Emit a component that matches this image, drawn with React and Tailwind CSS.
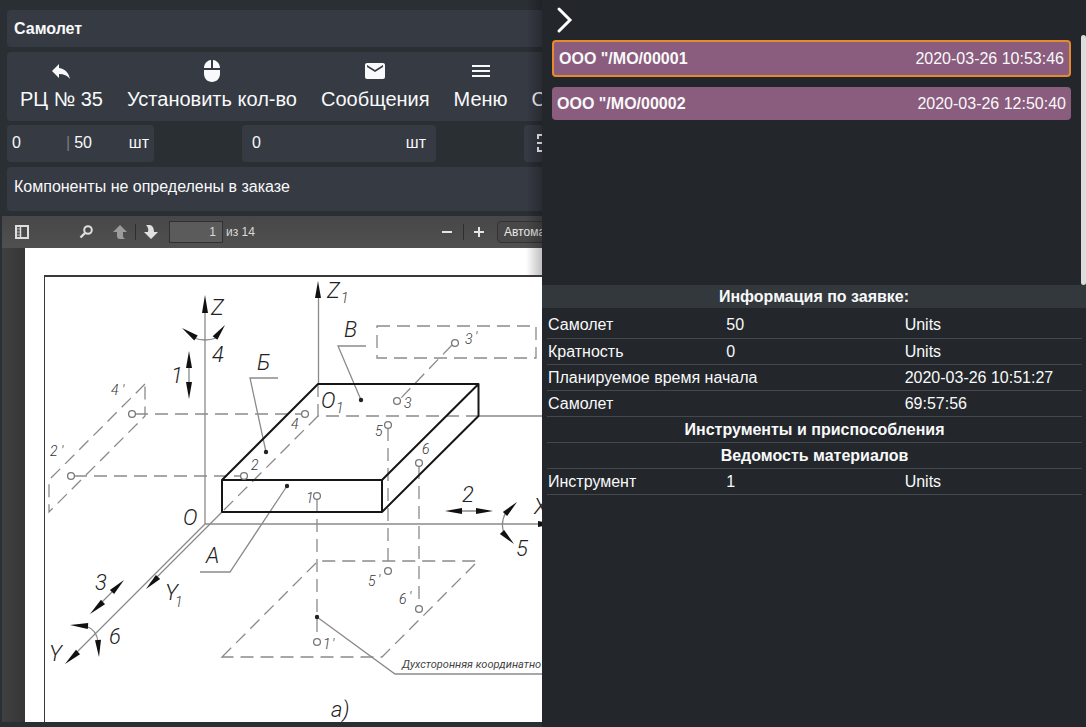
import React from "react";
import { MdEmail, MdMenu, MdMouse, MdReply } from "react-icons/md";

const orders = [
  { name: 'ООО "/МО/00001', date: "2020-03-26 10:53:46", active: true },
  { name: 'ООО "/МО/00002', date: "2020-03-26 12:50:40", active: false },
];

const toolbarItems = [
  { name: "РЦ № 35", icon: <MdReply size={24} /> },
  { name: "Установить кол-во", icon: <MdMouse size={24} /> },
  { name: "Сообщения", icon: <MdEmail size={24} /> },
  { name: "Меню", icon: <MdMenu size={24} /> },
  { name: "С", icon: null },
];

const infoRows = [
  { name: "Самолет", value: "50", unit: "Units" },
  { name: "Кратность", value: "0", unit: "Units" },
  { name: "Планируемое время начала", unit: "2020-03-26 10:51:27" },
  { name: "Самолет", value: "", unit: "69:57:56" },
  { title: "Инструменты и приспособления" },
  { title: "Ведомость материалов" },
  { name: "Инструмент", value: "1", unit: "Units" },
];

// [tip x, tip y, base x, base y]
const arrows = [
  [205, 295, 205, 313],
  [318, 281, 318, 298],
  [182, 328, 196, 338],
  [225, 325, 215, 338],
  [189, 351, 189, 368],
  [189, 399, 189, 382],
  [65, 664, 78, 652],
  [146, 589, 158, 577],
  [445, 511, 462, 511],
  [493, 511, 476, 511],
  [517, 502, 505, 514],
  [514, 544, 502, 532],
  [124, 580, 112, 592],
  [90, 614, 103, 602],
  [70, 625, 88, 626],
  [99, 657, 98, 640],
  [556, 524, 538, 524],
];

const circles = [
  [132, 414],
  [305, 414],
  [71, 476],
  [244, 476],
  [455, 343],
  [397, 401],
  [388, 425],
  [388, 571],
  [419, 463],
  [419, 609],
  [317, 496],
  [317, 642],
];

const dots = [
  [266, 452],
  [361, 400],
  [287, 486],
  [317, 617],
];

const bigLabels = [
  ["Z", 211, 315],
  ["4", 212, 362],
  ["1", 171, 383],
  ["Б", 257, 370],
  ["В", 344, 337],
  ["Z", 327, 298],
  ["О", 321, 408],
  ["О", 183, 525],
  ["А", 206, 563],
  ["3", 95, 590],
  ["6", 109, 644],
  ["Y", 49, 661],
  ["Y", 165, 600],
  ["2", 462, 502],
  ["X", 534, 514],
  ["5", 516, 556],
  ["а)", 331, 717],
];

const smallLabels = [
  ["1", 341, 303],
  ["1", 336, 413],
  ["1", 175, 607],
  ["4", 111, 395],
  ["′", 122, 395],
  ["2", 50, 456],
  ["′", 61, 456],
  ["4", 291, 429],
  ["2", 251, 470],
  ["3", 465, 344],
  ["′", 475, 342],
  ["3", 404, 408],
  ["5", 375, 436],
  ["6", 422, 454],
  ["1", 306, 503],
  ["5", 368, 586],
  ["′", 378, 585],
  ["6", 399, 604],
  ["′", 409, 602],
  ["1", 323, 649],
  ["′", 332, 649],
];

const arrowPath = ([tx, ty, bx, by]) => {
  const len = Math.hypot(tx - bx, ty - by);
  const nx = (-(ty - by) / len) * 3;
  const ny = ((tx - bx) / len) * 3;
  return `M${tx} ${ty}L${bx + nx} ${by + ny}L${bx - nx} ${by - ny}Z`;
};

const Drawing = () => (
  <svg
    width="517"
    height="474"
    viewBox="25 248 517 474"
    className="block shrink-0 font-['Roboto','Liberation_Sans',sans-serif] italic"
    fill="none"
  >
    {/* sheet frame */}
    <path d="M44 276H542" stroke="#3a3a3c" strokeWidth="2" />
    <path d="M44.500 276V722" stroke="#3a3a3c" />

    {/* axes and leaders */}
    <g stroke="#8a8a8a" strokeWidth="1.300">
      <path d="M205 310V524H542M205 524L70 659M222 512L150 584" />
      <path d="M318.500 295V384M479 416H542" />
      <path d="M278 378H250L266 452M366 346H338L361 400" />
      <path d="M287 486L230 572H200M317 617L395 674H542" />
      <path d="M194 338Q205 342 216 338M189 366V384M460 511H478" />
      <path d="M506 512Q500 523 504 533M113 591L102 602M86 626Q97 630 98 642" />
    </g>

    {/* hidden lines and projections */}
    <g stroke="#8a8a8a" strokeWidth="1.300" strokeDasharray="13 7">
      <path d="M318 384V416H479M318 416L222 512" />
      <path d="M145 384L49 480V512L145 416Z" />
      <path d="M135 414H302M74 476H241" />
      <path d="M377 326H536V358H377Z" />
      <path d="M452 345L400 399" />
      <path d="M388 428V568M419 466V606M317 499V639" />
      <path d="M222 657L318 561H478L382 657Z" />
    </g>

    {/* plate */}
    <path
      d="M222 480L318 384H478.500L382 480ZM222 480V512H382V480M382 512L478.500 416V384"
      stroke="#161616"
      strokeWidth="2"
      strokeLinejoin="round"
    />

    {circles.map(([cx, cy]) => (
      <circle key={`${cx}-${cy}`} cx={cx} cy={cy} r="3.400" stroke="#777" strokeWidth="1.300" />
    ))}
    {dots.map(([cx, cy]) => (
      <circle key={`${cx}-${cy}`} cx={cx} cy={cy} r="2.200" fill="#222" />
    ))}
    {arrows.map((arrow, index) => (
      <path key={index} d={arrowPath(arrow)} fill="#111" />
    ))}

    {bigLabels.map(([label, x, y]) => (
      <text key={`${x}-${y}`} x={x} y={y} fontSize="22" fontWeight="300" fill="#222">
        {label}
      </text>
    ))}
    {smallLabels.map(([label, x, y]) => (
      <text key={`${x}-${y}`} x={x} y={y} fontSize="14" fontWeight="300" fill="#333">
        {label}
      </text>
    ))}
    <text x="402" y="668" fontSize="11" fill="#444">
      Духсторонняя координатно
    </text>
  </svg>
);

const ViewerToolbar = () => (
  <div className="flex h-8 items-center bg-linear-to-b from-[#474747] to-[#505050] text-xs text-[#d9d9d9]">
    <button aria-label="Боковая панель" className="ml-3 w-4">
      <svg width="16" height="16" viewBox="0 0 16 16" fill="none" stroke="#dedede">
        <rect x="2" y="2" width="12" height="12" strokeWidth="2" />
        <path d="M6.500 2V14" strokeWidth="1.500" />
        <path d="M3 5H6M3 8H6M3 11H6" strokeWidth="0.800" />
      </svg>
    </button>
    <button aria-label="Найти" className="ml-12 w-4">
      <svg width="16" height="16" viewBox="0 0 16 16" fill="none" stroke="#dedede">
        <circle cx="10" cy="6" r="3.800" strokeWidth="2" />
        <path d="M7 9L2.500 13.500" strokeWidth="2.400" />
      </svg>
    </button>
    <button aria-label="Предыдущая страница" className="ml-[18px] w-4">
      <svg width="16" height="16" viewBox="0 0 16 16" fill="#9b9b9b">
        <path d="M8 1L15 8H11V12Q11 14 13 15H8Q5 15 5 12V8H1Z" />
      </svg>
    </button>
    <span className="ml-[7px] h-4 w-px bg-[#2e2e2e]" />
    <button aria-label="Следующая страница" className="ml-[7px] w-4">
      <svg width="16" height="16" viewBox="0 0 16 16" fill="#e0e0e0">
        <path d="M8 15L1 8H5Q6 4 3 1H7Q11 2 11 8H15Z" />
      </svg>
    </button>
    <input
      aria-label="Страница"
      defaultValue="1"
      className="ml-[10px] h-[22px] w-[54px] border border-[#303030] bg-[#5b5b5b] pr-[6px] text-right"
    />
    <span className="ml-[3px]">из 14</span>
    <button aria-label="Уменьшить" className="ml-auto w-4 shrink-0">
      <svg width="16" height="16" viewBox="0 0 16 16" stroke="#e4e4e4" strokeWidth="2">
        <path d="M3 8H13" />
      </svg>
    </button>
    <span className="ml-2 h-4 w-px bg-[#2e2e2e]" />
    <button aria-label="Увеличить" className="ml-[7px] w-4 shrink-0">
      <svg width="16" height="16" viewBox="0 0 16 16" stroke="#e4e4e4" strokeWidth="2">
        <path d="M3 8H13M8 3V13" />
      </svg>
    </button>
    <div className="ml-[10px] w-[45px] shrink-0 overflow-hidden">
      <select
        aria-label="Масштаб"
        className="block h-[22px] w-32 appearance-none rounded-sm border border-[#333] bg-[#484848] pl-[6px] text-[#e8e8e8]"
      >
        <option>Автоматически</option>
      </select>
    </div>
  </div>
);

const Workspace = () => (
  <main className="relative flex min-w-0 flex-col overflow-hidden pt-[10px] pb-[5px]">
    <h1 className="ml-[7px] flex h-[37px] shrink-0 items-center rounded-l bg-[#363a43] pl-[7px] font-bold">
      Самолет
    </h1>

    <nav className="mt-[5px] ml-[7px] flex h-[69px] shrink-0 gap-6 rounded-l bg-[#363a43] pt-[7px] pl-[13px] text-xl">
      {toolbarItems.map((item) => (
        <button key={item.name} className="flex shrink-0 flex-col items-center whitespace-nowrap">
          <span className="h-6">{item.icon}</span>
          <span className="leading-8">{item.name}</span>
        </button>
      ))}
    </nav>

    <div className="mt-1 ml-[7px] flex h-[37px] shrink-0 gap-[88px]">
      <div className="flex w-[147px] shrink-0 items-center rounded bg-[#363a43] px-[5px] pb-0.5">
        <input aria-label="Выполнено" defaultValue="0" className="w-[54px]" />
        <span className="text-[#777b84]">|</span>
        <span className="ml-1">50</span>
        <span className="ml-auto">шт</span>
      </div>
      <div className="flex w-[194px] shrink-0 items-center rounded bg-[#363a43] px-[10px] pb-0.5">
        <input aria-label="Количество" defaultValue="0" className="w-24" />
        <span className="ml-auto">шт</span>
      </div>
      <button
        aria-label="Сканировать"
        className="flex w-11 shrink-0 items-center rounded bg-[#363a43] pb-0.5 pl-[10px]"
      >
        <svg width="24" height="24" viewBox="0 0 24 24" fill="none" stroke="#fff" strokeWidth="2">
          <path d="M4 8V4H8M16 4H20V8M4 16V20H8M16 20H20V16M3 12H21" />
        </svg>
      </button>
    </div>

    <p className="mt-[5px] ml-[7px] h-11 shrink-0 rounded-l bg-[#363a43] pt-2 pl-[7px]">
      Компоненты не определены в заказе
    </p>

    <section className="mt-[5px] ml-[2px] flex min-h-0 flex-1 flex-col">
      <ViewerToolbar />
      <div className="min-h-0 flex-1 overflow-hidden bg-linear-to-r from-[#404041] to-[#363637] to-[23px] pl-[23px]">
        <div className="h-full bg-white">
          <Drawing />
        </div>
      </div>
    </section>

    {/* shade thrown by the side panel */}
    <div className="pointer-events-none absolute top-0 right-0 h-[275px] w-4 bg-linear-to-l from-black/25 to-transparent" />
  </main>
);

const OrdersPanel = () => (
  <aside className="flex min-w-0 flex-col bg-[#23272b]">
    <div className="flex h-[35px] shrink-0 items-center pt-1 pl-3">
      <button aria-label="Закрыть панель">
        <svg width="20" height="28" viewBox="0 0 20 28" fill="none" stroke="#fff" strokeWidth="3">
          <path d="M5 3L16 14L5 25" strokeLinecap="round" />
        </svg>
      </button>
    </div>

    <div className="flex h-[250px] shrink-0">
      <div className="flex flex-1 flex-col gap-[10px] pt-[5px] pr-[10px] pl-[10px]">
        {orders.map((order) => (
          <button
            key={order.name}
            className={`${
              order.active ? "border-2 border-[#e68a2e]" : ""
            } flex items-center justify-between rounded bg-[#8a5c7d] px-[5px] py-1 leading-[25px]`}
          >
            <span className="font-bold">{order.name}</span>
            <span>{order.date}</span>
          </button>
        ))}
      </div>
      <div className="w-[5px] rounded bg-[#dcdcdc]" />
    </div>

    <h2 className="flex h-[23px] shrink-0 items-center justify-center bg-[#33383c] font-bold">
      Информация по заявке:
    </h2>
    <table className="mt-1 mr-1 ml-[5px] table-fixed border-collapse">
      <tbody>
        {infoRows.map((row, index) => (
          <tr key={index} className="h-[26px] border-b border-[#43484c] leading-[25px]">
            {row.title ? (
              <th colSpan={3} className="p-0">
                {row.title}
              </th>
            ) : (
              <>
                <td colSpan={row.value === undefined ? 2 : 1} className="w-1/3 p-0 pl-px">
                  {row.name}
                </td>
                {row.value !== undefined && <td className="w-1/3 p-0 pl-px">{row.value}</td>}
                <td className="w-1/3 p-0 pl-px">{row.unit}</td>
              </>
            )}
          </tr>
        ))}
      </tbody>
    </table>
  </aside>
);

const App = () => {
  return (
    <div className="grid h-screen grid-cols-[542fr_544fr] bg-[#2a2f34] font-['Liberation_Sans',Arial,sans-serif] text-base text-[#f8f9fa]">
      <Workspace />
      <OrdersPanel />
    </div>
  );
};

export default App;
